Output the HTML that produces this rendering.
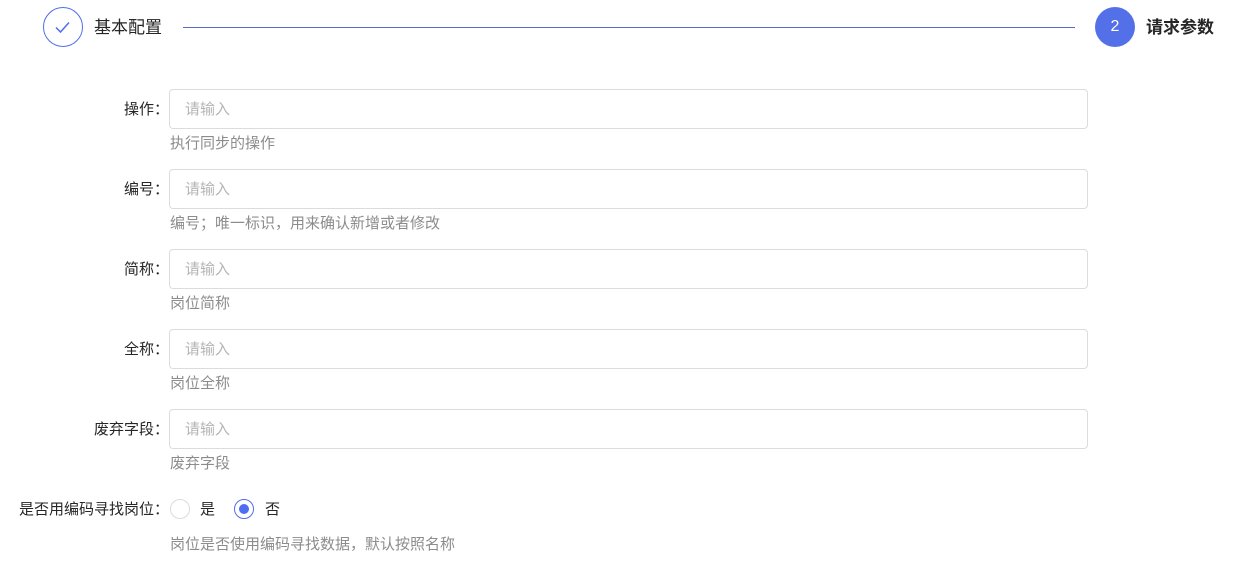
<html><head><style>
body{margin:0;width:1245px;height:566px;background:#fff;font-family:"Liberation Sans","Noto Sans CJK SC",sans-serif;position:relative;overflow:hidden}
.a{position:absolute}
.lbl{right:1076px;font-size:15px;color:#262626;text-align:right;white-space:nowrap;line-height:20px}
.inp{left:169px;width:917px;height:38px;border:1px solid #dcdcdc;border-radius:4px;box-sizing:content-box}
.inp span{position:absolute;left:15px;top:10px;font-size:15px;color:#b5b5b5;line-height:20px}
.help{left:170px;font-size:15px;color:#8c8c8c;line-height:20px}
</style></head><body>
<div class="a" style="left:43px;top:7px;width:38px;height:38px;border:1px solid #4e6ef2;border-radius:50%"></div>
<svg class="a" style="left:52px;top:16px" width="22" height="22" viewBox="0 0 22 22"><path d="M4 11.5l4.5 4.5L17 6.5" fill="none" stroke="#4e6ef2" stroke-width="1.5"/></svg>
<div class="a" style="left:94px;top:17px;font-size:17px;color:#262626;line-height:22px">基本配置</div>
<div class="a" style="left:183px;top:27px;width:892px;height:1px;background:#5a6bc7"></div>
<div class="a" style="left:1095px;top:7px;width:40px;height:40px;border-radius:50%;background:#5470e8;color:#fff;font-size:16px;text-align:center;line-height:40px">2</div>
<div class="a" style="left:1146px;top:17px;font-size:17px;font-weight:bold;color:#262626;line-height:22px">请求参数</div>

<div class="a lbl" style="top:100px">操作：</div>
<div class="a inp" style="top:89px"><span>请输入</span></div>
<div class="a help" style="top:134px">执行同步的操作</div>

<div class="a lbl" style="top:180px">编号：</div>
<div class="a inp" style="top:169px"><span>请输入</span></div>
<div class="a help" style="top:214px">编号；唯一标识，用来确认新增或者修改</div>

<div class="a lbl" style="top:260px">简称：</div>
<div class="a inp" style="top:249px"><span>请输入</span></div>
<div class="a help" style="top:294px">岗位简称</div>

<div class="a lbl" style="top:340px">全称：</div>
<div class="a inp" style="top:329px"><span>请输入</span></div>
<div class="a help" style="top:374px">岗位全称</div>

<div class="a lbl" style="top:420px">废弃字段：</div>
<div class="a inp" style="top:409px"><span>请输入</span></div>
<div class="a help" style="top:454px">废弃字段</div>

<div class="a lbl" style="top:500px">是否用编码寻找岗位：</div>
<div class="a" style="left:170px;top:499px;width:18px;height:18px;border:1px solid #dcdcdc;border-radius:50%"></div>
<div class="a" style="left:200px;top:500px;font-size:15px;color:#262626;line-height:20px">是</div>
<div class="a" style="left:234px;top:499px;width:18px;height:18px;border:1px solid #4e6ef2;border-radius:50%"></div>
<div class="a" style="left:239px;top:504px;width:10px;height:10px;background:#4e6ef2;border-radius:50%"></div>
<div class="a" style="left:265px;top:500px;font-size:15px;color:#262626;line-height:20px">否</div>
<div class="a help" style="top:535px">岗位是否使用编码寻找数据，默认按照名称</div>
</body></html>
